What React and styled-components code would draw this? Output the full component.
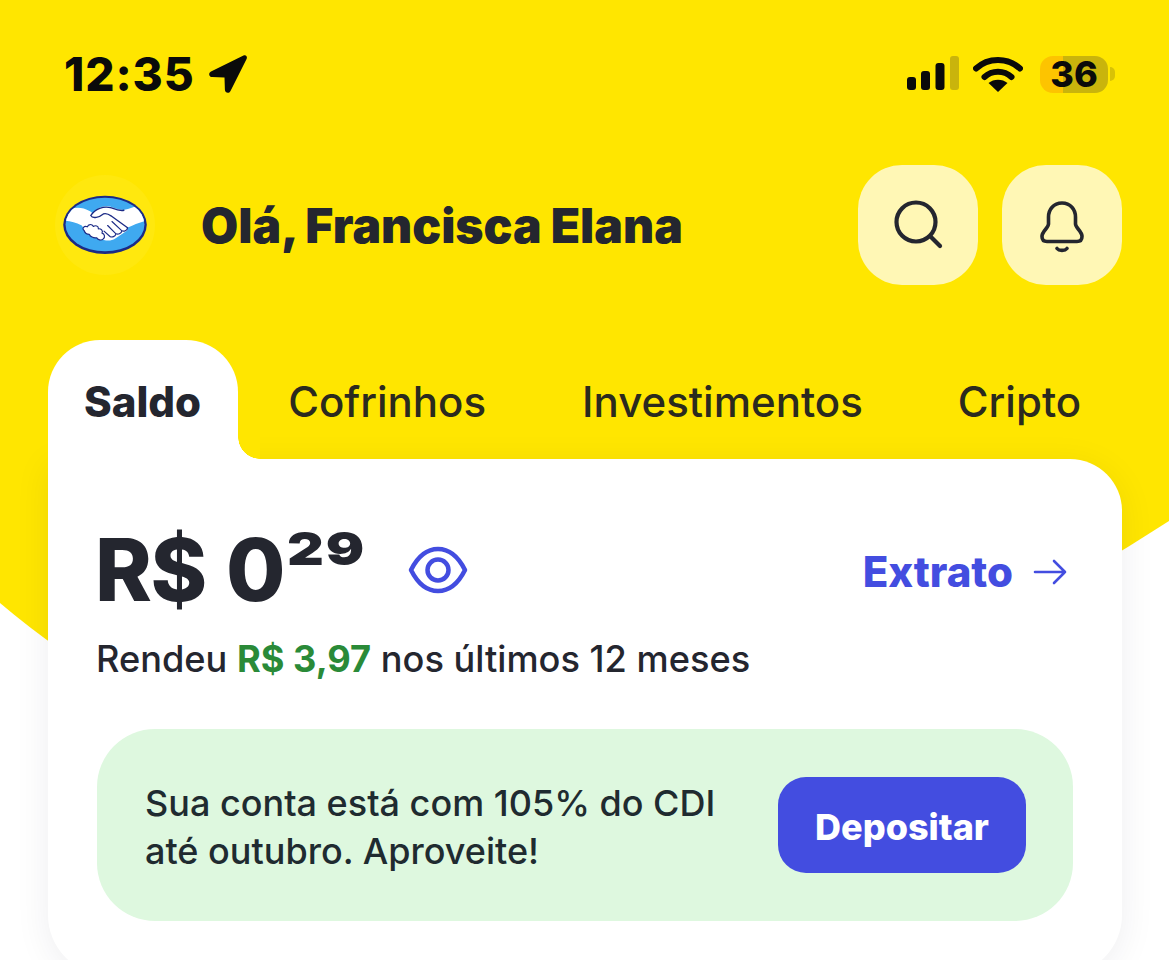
import React from "react";
import styled, { createGlobalStyle } from "styled-components";

const Global = createGlobalStyle`
  html, body { margin: 0; padding: 0; background: #fff; }
  * { box-sizing: border-box; }
`;

const Screen = styled.div`
  position: relative;
  width: 1169px;
  height: 960px;
  overflow: hidden;
  background: #fff;
  font-family: Inter, "Liberation Sans", sans-serif;
  color: #24262f;
`;

const YellowBackdrop = styled.div`
  position: absolute;
  inset: 0;
  background: #ffe600;
  clip-path: path("M0 0H1169V521Q450 985 0 603Z");
`;

const Content = styled.div`
  position: relative;
`;

const StatusBar = styled.div`
  height: 146px;
  padding: 2px 54px 0 64px;
  display: flex;
  align-items: center;
  justify-content: space-between;
  color: #0a0a0a;
`;

const TimeGroup = styled.div`
  display: flex;
  align-items: center;
  gap: 13px;
`;

const Time = styled.span`
  font-size: 46px;
  font-weight: 800;
  letter-spacing: 0.9px;
  line-height: 1;
`;

const StatusIcons = styled.div`
  display: flex;
  align-items: center;
  gap: 14px;
`;

const BatteryWrap = styled.div`
  margin-left: 3px;
  display: flex;
  align-items: center;
  gap: 2px;
`;

const Battery = styled.div`
  width: 68px;
  height: 37px;
  border-radius: 13px;
  display: flex;
  align-items: center;
  justify-content: center;
  background: linear-gradient(90deg, #fdc400 34%, #c9b40c 34%);
  font-size: 36px;
  font-weight: 800;
  line-height: 1;
`;

const BatteryNub = styled.div`
  width: 5px;
  height: 14px;
  border-radius: 0 7px 7px 0;
  background: #d8c206;
`;

const Header = styled.header`
  margin-top: 19px;
  height: 120px;
  padding: 0 47px 0 55px;
  display: flex;
  align-items: center;
`;

const Logo = styled.div`
  width: 100px;
  height: 100px;
  border-radius: 50%;
  background: #ffe80e;
  display: flex;
  align-items: center;
  justify-content: center;
`;

const Greeting = styled.h1`
  flex: 1;
  margin: 2px 0 0 46px;
  font-size: 48px;
  font-weight: 900;
  letter-spacing: 0;
  word-spacing: -0.5px;
  line-height: 1;
`;

const HeaderButton = styled.div`
  width: 120px;
  height: 120px;
  margin-left: ${(p) => p.$gap || 0}px;
  border-radius: 44px;
  background: #fff7b5;
  display: flex;
  align-items: center;
  justify-content: center;
`;

const Tabs = styled.nav`
  margin: 55px 47px 0 48px;
  height: 119px;
  display: flex;
`;

const Tab = styled.div`
  position: relative;
  flex-shrink: 0;
  white-space: nowrap;
  padding: 5px ${(p) => (p.$active ? 37 : 48)}px 0 ${(p) => (p.$active ? 36 : 48)}px;
  margin-left: ${(p) => p.$offset || 0}px;
  display: flex;
  align-items: center;
  font-size: 42px;
  line-height: 1;
  font-weight: ${(p) => (p.$active ? 800 : 500)};
  color: ${(p) => (p.$active ? "#24262f" : "#2b2a1e")};
  background: ${(p) => (p.$active ? "#fff" : "transparent")};
  border-radius: ${(p) => (p.$active ? "52px 52px 0 0" : "0")};

  ${(p) =>
    p.$active &&
    `
    &::after {
      content: "";
      position: absolute;
      right: -22px;
      bottom: 0;
      width: 22px;
      height: 22px;
      background: radial-gradient(circle at 100% 0, #ffe600 21.5px, #fff 22px);
    }
  `}
`;

const Card = styled.section`
  margin: 0 47px 0 48px;
  height: 516px;
  padding: 0 49px;
  background: #fff;
  border-radius: 0 52px 60px 60px;
  box-shadow: 0 6px 36px rgba(30, 30, 50, 0.07);
`;

const BalanceRow = styled.div`
  height: 172px;
  padding-top: 50px;
  display: flex;
  align-items: center;
  justify-content: space-between;
`;

const Amount = styled.div`
  display: flex;
  align-items: center;
`;

const Value = styled.span`
  margin-left: -2px;
  font-size: 86px;
  font-weight: 800;
  letter-spacing: -1.5px;
  word-spacing: 3px;
  line-height: 1;
`;

const Cents = styled.span`
  align-self: flex-start;
  width: 66px;
  margin: -2px 0 0 3px;
  font-size: 46px;
  font-weight: 900;
  letter-spacing: 1.5px;
  line-height: 1;
  transform: scaleX(1.24);
  transform-origin: left top;
`;

const EyeSlot = styled.div`
  margin-left: 55px;
  display: flex;
`;

const StatementLink = styled.div`
  display: flex;
  align-items: center;
  gap: 20px;
  margin: 3px 6px 0 0;
  color: #434de0;
  font-size: 42px;
  font-weight: 800;
  line-height: 1;
`;

const Yield = styled.p`
  margin: 7px 0 0 -1px;
  font-size: 36.2px;
  font-weight: 500;
  line-height: 42px;
  white-space: nowrap;
`;

const YieldValue = styled.strong`
  color: #2a8a38;
  font-weight: 700;
`;

const Banner = styled.div`
  margin-top: 49px;
  height: 192px;
  padding: 0 47px 0 48px;
  border-radius: 58px;
  background: #def8df;
  display: flex;
  align-items: center;
  justify-content: space-between;
`;

const BannerText = styled.p`
  margin: 4px 0 0;
  font-size: 36px;
  font-weight: 500;
  line-height: 48px;
  color: #1f2b30;
  white-space: nowrap;
`;

const DepositButton = styled.div`
  width: 248px;
  height: 96px;
  padding-top: 4px;
  border-radius: 28px;
  background: #434de0;
  color: #fff;
  font-size: 36px;
  font-weight: 800;
  display: flex;
  align-items: center;
  justify-content: center;
`;

const LocationIcon = () => (
  <svg width="40" height="40" viewBox="0 0 40 40">
    <path d="M35.500 1.500 3 17.500c-3 1.500-2 5.500 1.200 5.600l12.300.4.400 12.300c.1 3.300 4.200 4.200 5.600 1.200L38.700 4.700C39.700 2.600 37.600.5 35.500 1.500Z" fill="#0a0a0a" />
  </svg>
);

const SignalIcon = () => (
  <svg width="52" height="36" viewBox="0 0 52 36">
    <rect x="0" y="21" width="9" height="13" rx="3" fill="#0a0a0a" />
    <rect x="14" y="15" width="9" height="19" rx="3" fill="#0a0a0a" />
    <rect x="28.500" y="7" width="9" height="27" rx="3" fill="#0a0a0a" />
    <rect x="43" y="0" width="9" height="34" rx="3" fill="#c9b40c" />
  </svg>
);

const WifiIcon = () => (
  <svg width="50" height="38" viewBox="0 0 50 38" fill="none">
    <path d="M3 13.500C15 2 35 2 47 13.500" stroke="#0a0a0a" strokeWidth="6" strokeLinecap="round" />
    <path d="M11.500 22C19 15 31 15 38.500 22" stroke="#0a0a0a" strokeWidth="6" strokeLinecap="round" />
    <path d="M25 37 15.500 28C20.500 23.500 29.500 23.500 34.500 28Z" fill="#0a0a0a" />
  </svg>
);

const HandshakeLogo = () => (
  <svg width="90" height="63" viewBox="60 70 270 190">
    <defs>
      <clipPath id="logoFace">
        <ellipse cx="195" cy="162" rx="119" ry="81" />
      </clipPath>
    </defs>
    <ellipse cx="195" cy="163" rx="126" ry="88" fill="#1b2a86" />
    <ellipse cx="195" cy="162" rx="119" ry="81" fill="#3fa9f0" />
    <g clipPath="url(#logoFace)">
      <path d="M70 125C95 110 120 105 150 122L158 128C170 112 190 103 210 108C225 113 235 118 250 118C270 115 285 108 305 100C322 125 325 140 320 150C300 155 280 163 262 172V180L225 205C215 212 195 212 180 205L135 180L125 165C105 155 90 152 68 150Z" fill="#fff" />
    </g>
    <path d="M152 135C165 115 190 105 215 112C228 117 240 122 252 119M152 135C158 146 178 140 190 130C200 126 208 132 215 137L263 172" fill="none" stroke="#1b2a86" strokeWidth="4" strokeLinecap="round" />
    <path d="M263 172C262 180 252 184 246 181L216 153M246 181C244 190 234 193 228 190L203 165M228 190C226 198 216 202 210 198L192 182" fill="none" stroke="#1b2a86" strokeWidth="3.500" strokeLinecap="round" />
    <path d="M132 180C124 174 132 164 142 169C144 160 156 160 160 168C166 163 176 167 175 175C183 174 190 181 186 188C194 190 196 200 190 205C184 212 172 208 170 202C160 204 150 198 148 192C140 192 134 186 132 180Z" fill="#fff" stroke="#1b2a86" strokeWidth="3.500" strokeLinejoin="round" />
  </svg>
);

const SearchIcon = () => (
  <svg width="60" height="60" viewBox="0 0 60 60" fill="none" stroke="#24262f" strokeWidth="4.200" strokeLinecap="round">
    <circle cx="28" cy="27" r="19.500" />
    <path d="M42.500 41.500 52 51" />
  </svg>
);

const BellIcon = () => (
  <svg width="60" height="60" viewBox="0 0 60 60" fill="none" stroke="#24262f" strokeWidth="3.600" strokeLinecap="round" strokeLinejoin="round">
    <path d="M30 8C21.500 8 16.500 14.500 16.500 22V29C16.500 33 10 36 10 41.500C10 45 12 46.500 15 46.500H45C48 46.500 50 45 50 41.500C50 36 43.500 33 43.500 29V22C43.500 14.500 38.500 8 30 8Z" />
    <path d="M25 53.500C27 56 33 56 35 53.500" />
  </svg>
);

const EyeIcon = () => (
  <svg width="60" height="48" viewBox="0 0 60 48" fill="none" stroke="#434de0" strokeWidth="4.500">
    <path d="M3 24C10 10 20 3 30 3C40 3 50 10 57 24C50 38 40 45 30 45C20 45 10 38 3 24Z" strokeLinejoin="round" />
    <circle cx="30" cy="24" r="10.500" />
  </svg>
);

const ArrowIcon = () => (
  <svg width="34" height="26" viewBox="0 0 34 26" fill="none" stroke="#434de0" strokeWidth="2.600" strokeLinecap="round" strokeLinejoin="round">
    <path d="M2 13H32M21 2 32 13 21 24" />
  </svg>
);

export default function App() {
  return (
    <Screen>
      <Global />
      <YellowBackdrop />
      <Content>
        <StatusBar>
          <TimeGroup>
            <Time>12:35</Time>
            <LocationIcon />
          </TimeGroup>
          <StatusIcons>
            <SignalIcon />
            <WifiIcon />
            <BatteryWrap>
              <Battery>36</Battery>
              <BatteryNub />
            </BatteryWrap>
          </StatusIcons>
        </StatusBar>
        <Header>
          <Logo>
            <HandshakeLogo />
          </Logo>
          <Greeting>Olá, Francisca Elana</Greeting>
          <HeaderButton>
            <SearchIcon />
          </HeaderButton>
          <HeaderButton $gap={24}>
            <BellIcon />
          </HeaderButton>
        </Header>
        <Tabs>
          <Tab $active>Saldo</Tab>
          <Tab $offset={2}>Cofrinhos</Tab>
          <Tab>Investimentos</Tab>
          <Tab $offset={-1}>Cripto</Tab>
        </Tabs>
        <Card>
          <BalanceRow>
            <Amount>
              <Value>R$ 0</Value>
              <Cents>29</Cents>
              <EyeSlot>
                <EyeIcon />
              </EyeSlot>
            </Amount>
            <StatementLink>
              Extrato
              <ArrowIcon />
            </StatementLink>
          </BalanceRow>
          <Yield>
            Rendeu <YieldValue>R$ 3,97</YieldValue> nos últimos 12 meses
          </Yield>
          <Banner>
            <BannerText>
              Sua conta está com 105% do CDI
              <br />
              até outubro. Aproveite!
            </BannerText>
            <DepositButton>Depositar</DepositButton>
          </Banner>
        </Card>
      </Content>
    </Screen>
  );
}
